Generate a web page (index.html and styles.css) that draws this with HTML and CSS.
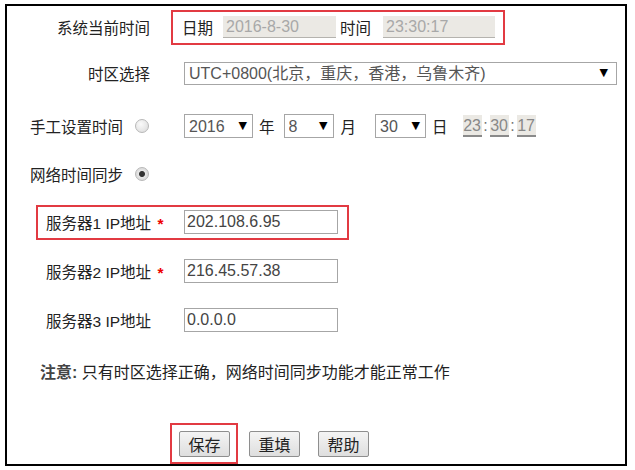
FILE: index.html
```html
<!DOCTYPE html>
<html lang="zh-CN">
<head>
    <meta charset="UTF-8">
    <title>时间设置</title>
    <link rel="stylesheet" href="styles.css">
</head>
<body>
    <form class="panel">
        <div class="row row-now">
            <span class="lbl-r">系统当前时间</span>
            <div class="now-box">
                <span class="now-d">日期</span>
                <span class="ro ro-date">2016-8-30</span>
                <span class="now-t">时间</span>
                <span class="ro ro-time">23:30:17</span>
            </div>
        </div>
        <div class="row row-zone">
            <span class="lbl-r">时区选择</span>
            <span class="sel sel-zone">
                <select><option>UTC+0800(北京，重庆，香港，乌鲁木齐)</option></select>
            </span>
        </div>
        <div class="row row-manual">
            <label class="lbl-l">手工设置时间<input type="radio" name="mode" class="radio"></label>
            <span class="sel sel-year"><select><option>2016</option></select></span>
            <span class="unit u-year">年</span>
            <span class="sel sel-month"><select><option>8</option></select></span>
            <span class="unit u-month">月</span>
            <span class="sel sel-day"><select><option>30</option></select></span>
            <span class="unit u-day">日</span>
            <span class="clock">
                <span class="part">23</span><span class="sep">:</span><span class="part">30</span><span class="sep">:</span><span class="part">17</span>
            </span>
        </div>
        <div class="row row-net">
            <label class="lbl-l">网络时间同步<input type="radio" name="mode" class="radio" checked></label>
        </div>
        <div class="row row-srv1">
            <div class="srv hl">
                <span class="srv-lbl">服务器1 IP地址 <b class="req">*</b></span>
                <input type="text" class="ip" value="202.108.6.95">
            </div>
        </div>
        <div class="row row-srv2">
            <div class="srv">
                <span class="srv-lbl">服务器2 IP地址 <b class="req">*</b></span>
                <input type="text" class="ip" value="216.45.57.38">
            </div>
        </div>
        <div class="row row-srv3">
            <div class="srv">
                <span class="srv-lbl">服务器3 IP地址</span>
                <input type="text" class="ip" value="0.0.0.0">
            </div>
        </div>
        <div class="row row-note">
            <p class="note"><b>注意:</b> 只有时区选择正确，网络时间同步功能才能正常工作</p>
        </div>
        <div class="btns">
            <span class="btn-box"><button type="button">保存</button></span>
            <button type="button" class="btn-reset">重填</button>
            <button type="button" class="btn-help">帮助</button>
        </div>
    </form>
</body>
</html>
```

FILE: styles.css
```css
body {
    margin: 0;
    font-family: "Liberation Sans", "Noto Sans CJK SC", sans-serif;
    font-size: 15.5px;
    color: #222;
    background-color: #fff;
}
.panel {
    box-sizing: border-box;
    width: 622px;
    height: 462px;
    margin: 4px 0 0 5px;
    border: 2px solid #000;
}
.row {
    display: flex;
    align-items: center;
    white-space: nowrap;
}
.row-now { height: 42px; }
.row-zone { height: 50px; }
.row-manual { height: 56px; }
.row-net { height: 40px; }
.row-srv1 { height: 56px; }
.row-srv2 { height: 42px; }
.row-srv3 { height: 56px; }
.row-note { height: 46px; }

.lbl-r {
    width: 143px;
    text-align: right;
    flex-shrink: 0;
}
.lbl-l {
    box-sizing: border-box;
    width: 177px;
    padding-left: 23px;
    display: flex;
    align-items: center;
    flex-shrink: 0;
}

/* current time */
.now-box {
    box-sizing: border-box;
    display: flex;
    align-items: center;
    width: 334px;
    height: 35px;
    margin-left: 21px;
    padding: 0 9px;
    border: 2px solid #e23a42;
}
.now-box span {
    flex-shrink: 0;
}
.ro {
    box-sizing: border-box;
    height: 22px;
    line-height: 21px;
    padding-left: 3px;
    background-color: #ebe9e4;
    border-bottom: 1px solid #b5b3ae;
    color: #a8a8a8;
    font-size: 16px;
}
.ro-date {
    width: 113px;
    margin-left: 10px;
}
.now-t {
    margin-left: 4px;
}
.ro-time {
    width: 112px;
    margin-left: 12px;
}

/* selects */
.sel {
    position: relative;
    display: inline-block;
    flex-shrink: 0;
}
.sel select {
    box-sizing: border-box;
    appearance: none;
    -webkit-appearance: none;
    height: 24px;
    padding: 0 0 0 4px;
    border: 1px solid #a6a6a6;
    border-radius: 0;
    background-color: #fff;
    font-family: inherit;
    font-size: 16px;
    color: #555;
}
.sel::after {
    content: "▼";
    position: absolute;
    right: 6px;
    top: 5px;
    font-family: "DejaVu Sans", sans-serif;
    font-size: 11px;
    color: #000;
    pointer-events: none;
}
.sel-zone {
    margin-left: 34px;
}
.sel-zone select {
    width: 433px;
    height: 23px;
}
.sel-zone::after {
    right: 9px;
    top: 4px;
}
.sel-year select { width: 69px; }
.sel-month select { width: 50px; }
.sel-day select { width: 51px; }
.unit {
    flex-shrink: 0;
}
.u-year {
    margin: 0 9px 0 6px;
}
.u-month {
    margin: 0 19px 0 7px;
}
.u-day {
    margin: 0 0 0 6px;
}
.clock {
    display: flex;
    align-items: center;
    margin-left: 15px;
    color: #777;
    font-size: 16px;
}
.part {
    display: inline-block;
    box-sizing: border-box;
    width: 19px;
    height: 22px;
    line-height: 21px;
    text-align: center;
    background-color: #ebe9e4;
    border-bottom: 2px solid #8a8a8a;
    color: #888;
}
.sep {
    width: 8px;
    text-align: center;
}

/* radios */
.radio {
    appearance: none;
    -webkit-appearance: none;
    box-sizing: border-box;
    width: 14px;
    height: 14px;
    margin: 0 0 0 12px;
    border: 1px solid #b8b8b8;
    border-radius: 50%;
    background: radial-gradient(circle at 40% 35%, #fafafa, #d9d9d9);
}
.radio:checked {
    background: radial-gradient(circle, #333 0, #333 2.5px, #e6e6e6 3.5px, #d0d0d0 100%);
}

/* servers */
.srv {
    box-sizing: border-box;
    display: flex;
    align-items: center;
    width: 313px;
    height: 35px;
    margin-left: 29px;
    padding-left: 8px;
    border: 2px solid transparent;
}
.srv.hl {
    border-color: #e23a42;
}
.srv-lbl {
    width: 138px;
    flex-shrink: 0;
}
.req {
    color: #e00;
    font-weight: bold;
    margin-left: 2px;
}
.ip {
    box-sizing: border-box;
    width: 154px;
    height: 24px;
    padding: 0 0 0 2px;
    border: 1px solid #a6a6a6;
    font-family: inherit;
    font-size: 16px;
    color: #444;
}

/* note */
.note {
    margin: 0 0 0 33px;
    font-size: 16px;
}
.note b {
    color: #444;
}

/* buttons */
.btns {
    display: flex;
    align-items: center;
    padding: 29px 0 0 163px;
}
.btn-box {
    box-sizing: border-box;
    height: 41px;
    padding: 6px 6px 0 7px;
    border: 2px solid #e23a42;
}
.btns button {
    box-sizing: border-box;
    width: 51px;
    height: 26px;
    padding: 0;
    border: 1px solid #8e8e8e;
    border-radius: 2px;
    background: linear-gradient(#f4f4f4, #dedede);
    font-family: inherit;
    font-size: 16px;
    color: #222;
}
.btns .btn-reset {
    margin-left: 11px;
}
.btns .btn-help {
    margin-left: 18px;
}
```
